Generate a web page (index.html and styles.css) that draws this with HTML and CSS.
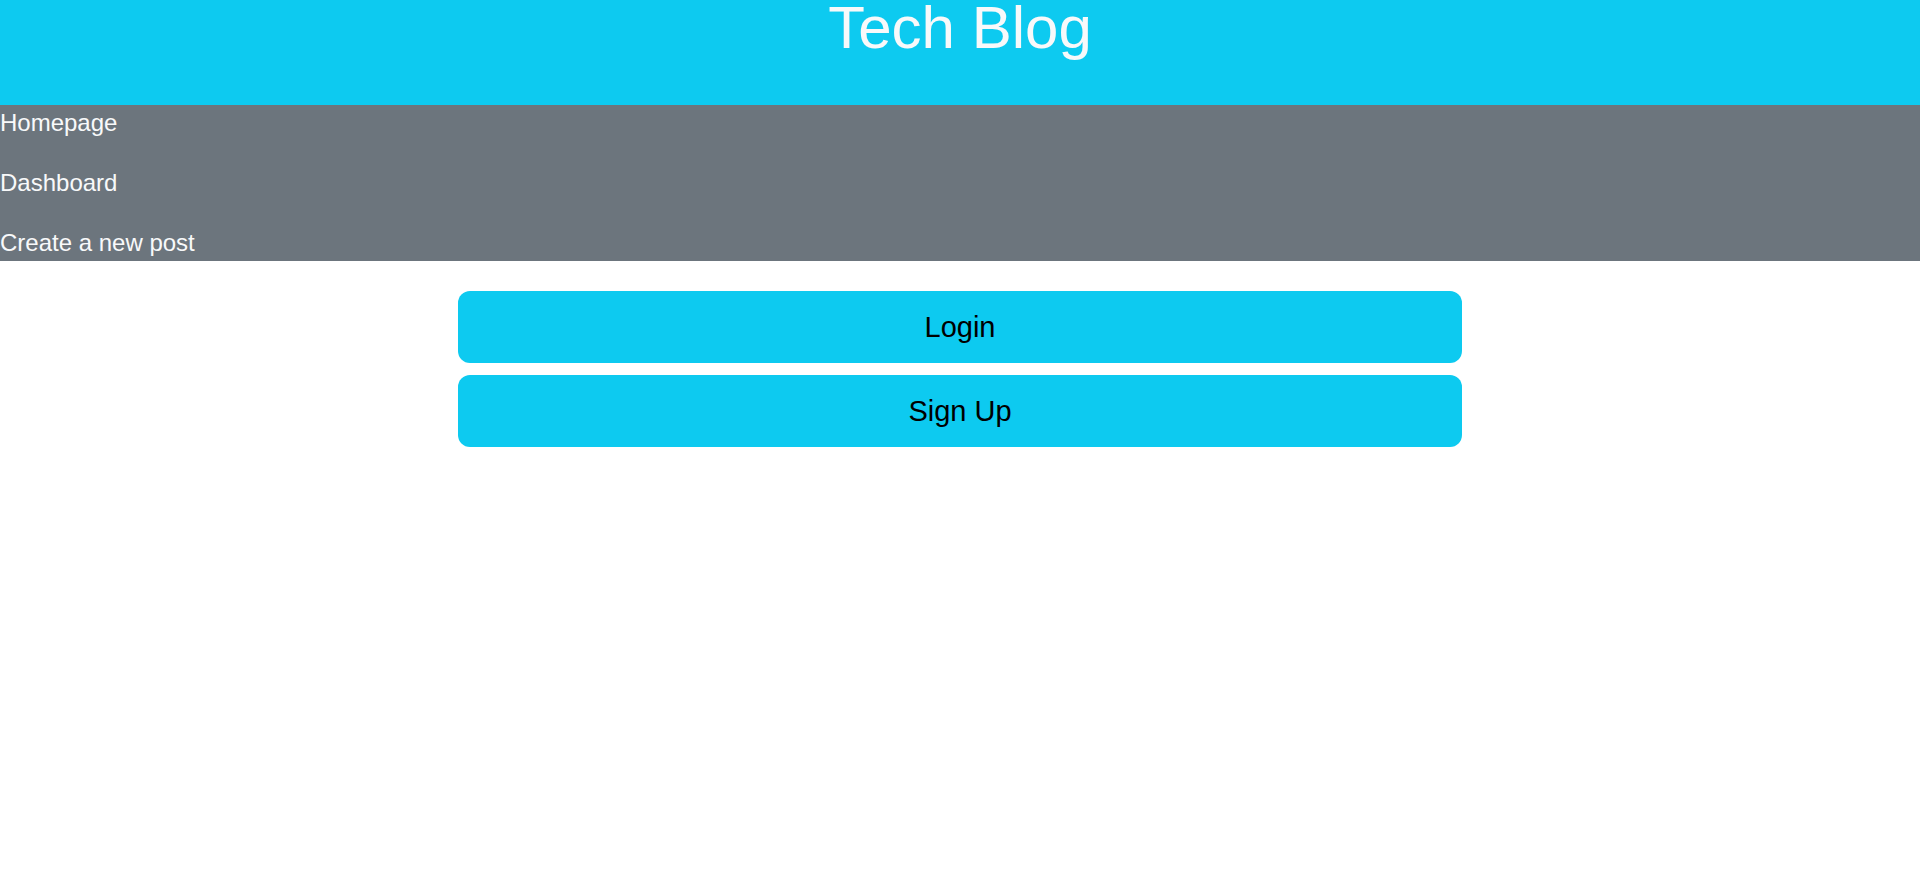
FILE: index.html
```html
<!DOCTYPE html>
<html lang="en">
<head>
    <meta charset="UTF-8">
    <meta name="viewport" content="width=device-width, initial-scale=1.0">
    <title>Tech Blog</title>
    <link rel="stylesheet" href="styles.css">
</head>
<body>
    <header class="site-header">
        <h1 class="site-title">Tech Blog</h1>
    </header>
    <nav class="site-nav">
        <a href="/" class="nav-link">Homepage</a>
        <a href="/dashboard" class="nav-link">Dashboard</a>
        <a href="/new-post" class="nav-link">Create a new post</a>
    </nav>
    <main class="auth-container">
        <button class="auth-button" id="loginButton">Login</button>
        <button class="auth-button" id="signupButton">Sign Up</button>
    </main>
</body>
</html>
```

FILE: styles.css
```css
body {
    margin: 0;
    padding: 0;
    font-family: 'Liberation Sans', Arial, sans-serif;
    background-color: #ffffff;
}
.site-header {
    background-color: #0dcaf0;
    height: 105px;
    text-align: center;
}
.site-title {
    margin: 0;
    font-size: 60px;
    font-weight: normal;
    line-height: 56px;
    color: #f8f9fa;
}
.site-nav {
    display: flex;
    flex-direction: column;
    gap: 24px;
    background-color: #6c757d;
}
.nav-link {
    color: #f8f9fa;
    font-size: 24px;
    line-height: 36px;
    text-decoration: none;
}
.auth-container {
    width: 1004px;
    margin: 30px auto 0;
    display: flex;
    flex-direction: column;
    gap: 12px;
}
.auth-button {
    height: 72px;
    background-color: #0dcaf0;
    color: #000000;
    border: none;
    border-radius: 12px;
    font-family: 'Liberation Sans', Arial, sans-serif;
    font-size: 29px;
    cursor: pointer;
}
```
